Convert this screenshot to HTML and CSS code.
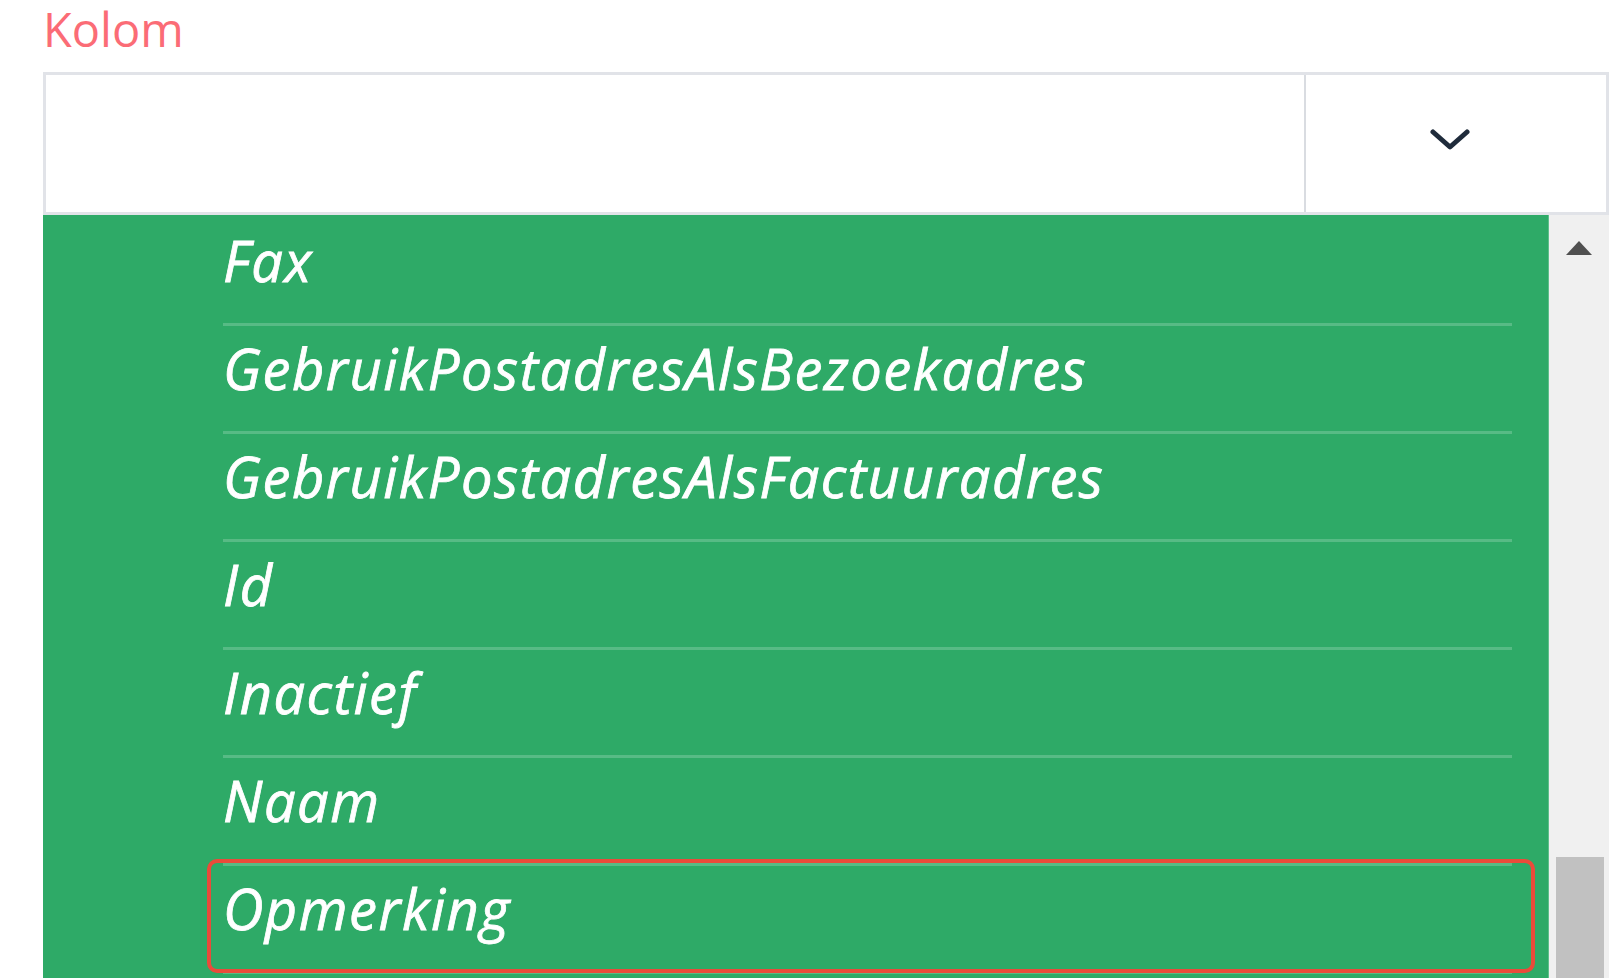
FILE: index.html
```html
<!DOCTYPE html>
<html lang="nl">
<head>
    <meta charset="UTF-8">
    <meta name="viewport" content="width=device-width, initial-scale=1.0">
    <title>Kolom kiezen</title>
    <link rel="stylesheet" href="styles.css">
</head>
<body>
    <div class="field">
        <label class="field-label" for="kolom">Kolom</label>

        <div class="select" id="kolom">
            <div class="select-value"></div>
            <div class="select-toggle">
                <svg class="chevron" width="40" height="24" viewBox="0 0 40 24">
                    <polyline points="3,4 20,19 37,4" fill="none" stroke="#1f2b3b" stroke-width="5" stroke-linecap="round" stroke-linejoin="round"/>
                </svg>
            </div>
        </div>

        <div class="dropdown">
            <ul class="options">
                <li class="option">Fax</li>
                <li class="option">GebruikPostadresAlsBezoekadres</li>
                <li class="option">GebruikPostadresAlsFactuuradres</li>
                <li class="option">Id</li>
                <li class="option">Inactief</li>
                <li class="option">Naam</li>
                <li class="option focused">Opmerking</li>
            </ul>
            <div class="scrollbar">
                <span class="scroll-up"></span>
                <span class="scroll-thumb"></span>
            </div>
        </div>
    </div>
</body>
</html>
```

FILE: styles.css
```css
html, body {
    height: 100%;
}

body {
    margin: 0;
    height: 978px;
    overflow: hidden;
    background-color: #ffffff;
    font-family: "Open Sans", "Noto Sans", sans-serif;
}

.field {
    padding: 0 8px 0 43px;
}

.field-label {
    display: block;
    font-size: 47px;
    line-height: 58px;
    color: #fb6c76;
}

/* closed select box */
.select {
    display: flex;
    height: 137px;
    margin-top: 14px;
    border: 3px solid #e1e3e8;
    background-color: #ffffff;
}

.select-value {
    flex: 1;
}

.select-toggle {
    width: 302px;
    border-left: 2px solid #d9dce1;
    display: flex;
    justify-content: center;
    align-items: center;
    padding: 0 12px 8px 0;
    box-sizing: border-box;
}

/* open list */
.dropdown {
    display: flex;
    height: 763px;
    overflow: hidden;
}

.options {
    flex: 1;
    margin: 0;
    padding: 0 36px 0 180px;
    list-style: none;
    background-color: #2eaa67;
    border-right: 1px solid #5fc08b;
}

.option {
    position: relative;
    border-top: 3px solid rgba(255, 255, 255, 0.2);
    line-height: 84px;
    padding-bottom: 21px;
    font-size: 56px;
    font-style: italic;
    letter-spacing: 1.5px;
    color: #ffffff;
    -webkit-text-stroke: 0.8px #ffffff;
    white-space: nowrap;
}

.option:first-child {
    border-top-color: transparent;
}

.option:last-child {
    border-bottom: 3px solid rgba(255, 255, 255, 0.2);
}

.option.focused::before {
    content: "";
    position: absolute;
    top: -7px;
    left: -16px;
    right: -23px;
    bottom: -2px;
    border: 4px solid #ea4b3a;
    border-radius: 10px;
}

.scrollbar {
    position: relative;
    width: 60px;
    background-color: #f0f0f0;
}

.scroll-up {
    position: absolute;
    top: 26px;
    left: 17px;
    width: 0;
    height: 0;
    border-left: 13px solid transparent;
    border-right: 13px solid transparent;
    border-bottom: 14px solid #505050;
}

.scroll-thumb {
    position: absolute;
    top: 642px;
    left: 7px;
    right: 5px;
    bottom: 0;
    background-color: #c1c1c1;
}
```
